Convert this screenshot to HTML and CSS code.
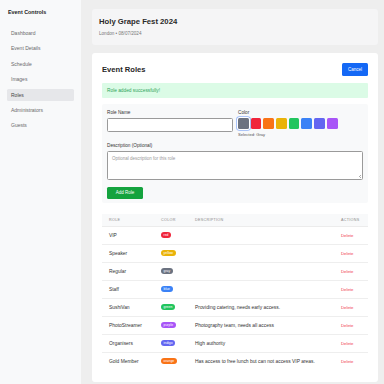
FILE: index.html
```html
<!DOCTYPE html>
<html>
<head>
<meta charset="utf-8">
<link rel="stylesheet" href="styles.css">
</head>
<body>
<div class="layout">
  <aside class="sidebar">
    <div class="side-title">Event Controls</div>
    <nav class="nav">
      <div class="nav-item">Dashboard</div>
      <div class="nav-item">Event Details</div>
      <div class="nav-item">Schedule</div>
      <div class="nav-item">Images</div>
      <div class="nav-item active">Roles</div>
      <div class="nav-item">Administrators</div>
      <div class="nav-item">Guests</div>
    </nav>
  </aside>
  <main class="main">
    <section class="event-head">
      <h1 class="event-title">Holy Grape Fest 2024</h1>
      <div class="event-sub">London • 08/07/2024</div>
    </section>
    <section class="card">
      <div class="card-head">
        <h2 class="card-title">Event Roles</h2>
        <button class="btn btn-blue">Cancel</button>
      </div>
      <div class="alert">Role added successfully!</div>
      <div class="form-box">
        <div class="form-row">
          <div class="field">
            <div class="label">Role Name</div>
            <div class="input"></div>
          </div>
          <div class="field">
            <div class="label">Color</div>
            <div class="swatches">
              <span class="sw sel" style="background:#6b7280"></span>
              <span class="sw" style="background:#f0253b"></span>
              <span class="sw" style="background:#f97316"></span>
              <span class="sw" style="background:#eab308"></span>
              <span class="sw" style="background:#22c55e"></span>
              <span class="sw" style="background:#3b82f6"></span>
              <span class="sw" style="background:#6366f1"></span>
              <span class="sw" style="background:#a855f7"></span>
            </div>
            <div class="selected">Selected: Gray</div>
          </div>
        </div>
        <div class="field desc">
          <div class="label">Description (Optional)</div>
          <div class="textarea">Optional description for this role<span class="grip"></span></div>
        </div>
        <button class="btn btn-green">Add Role</button>
      </div>
      <table class="roles">
        <colgroup><col style="width:52px"><col style="width:34px"><col style="width:146px"><col style="width:34px"></colgroup>
        <thead>
          <tr><th>Role</th><th>Color</th><th>Description</th><th>Actions</th></tr>
        </thead>
        <tbody>
          <tr><td>VIP</td><td><span class="badge" style="background:#f0253b">red</span></td><td></td><td class="del">Delete</td></tr>
          <tr><td>Speaker</td><td><span class="badge" style="background:#eab308">yellow</span></td><td></td><td class="del">Delete</td></tr>
          <tr><td>Regular</td><td><span class="badge" style="background:#6b7280">gray</span></td><td></td><td class="del">Delete</td></tr>
          <tr><td>Staff</td><td><span class="badge" style="background:#3b82f6">blue</span></td><td></td><td class="del">Delete</td></tr>
          <tr><td>SushiVan</td><td><span class="badge" style="background:#22c55e">green</span></td><td>Providing catering, needs early access.</td><td class="del">Delete</td></tr>
          <tr><td>PhotoStreamer</td><td><span class="badge" style="background:#a855f7">purple</span></td><td>Photography team, needs all access</td><td class="del">Delete</td></tr>
          <tr><td>Organisers</td><td><span class="badge" style="background:#6366f1">indigo</span></td><td>High authority</td><td class="del">Delete</td></tr>
          <tr><td>Gold Member</td><td><span class="badge" style="background:#f97316">orange</span></td><td>Has access to free lunch but can not access VIP areas.</td><td class="del">Delete</td></tr>
        </tbody>
      </table>
    </section>
  </main>
</div>
</body>
</html>
```
FILE: styles.css
```css
* { box-sizing: border-box; margin: 0; padding: 0; }
html, body { width: 384px; height: 384px; overflow: hidden; }
body { font-family: "Liberation Sans", Arial, sans-serif; color: #333; background: #eeeeee; }
.layout { display: flex; height: 384px; }
.sidebar { width: 81px; flex: none; background: #f8f9fa; padding: 9px 7px 0 7px; }
.side-title { font-size: 5.4px; font-weight: bold; color: #222; line-height: 6px; padding-left: 1px; }
.nav { margin-top: 12px; display: flex; flex-direction: column; gap: 3.4px; }
.nav-item { height: 12px; line-height: 12px; font-size: 5px; color: #6a6a6a; padding-left: 4px; border-radius: 1.5px; }
.nav-item.active { background: #e6e7ea; color: #444; }
.main { flex: 1; padding: 9px 6px 0 11px; background: #eeeeee; }
.event-head { background: #f5f5f6; border-radius: 3px; height: 36px; padding: 8px 7px; }
.event-title { font-size: 7.7px; font-weight: bold; color: #2a2a2a; line-height: 9px; }
.event-sub { font-size: 4.6px; color: #777; margin-top: 5px; line-height: 5px; }
.card { background: #fff; border-radius: 3px; margin-top: 8px; padding: 10px 10px 10px 10px; height: 329px; }
.card-head { display: flex; justify-content: space-between; align-items: center; height: 13px; }
.card-title { font-size: 7.6px; font-weight: bold; color: #262626; }
.btn { border: none; color: #fff; font-family: inherit; font-size: 4.5px; border-radius: 1.5px; height: 13px; }
.btn-blue { background: #1468f5; width: 26px; }
.alert { margin-top: 7px; height: 15px; line-height: 15px; background: #dbfbe6; color: #2fa35a; font-size: 4.8px; padding-left: 5px; border-radius: 1px; }
.form-box { margin-top: 6px; background: #f8f9fa; border-radius: 2px; padding: 6px 5px 5px 5px; height: 99px; }
.form-row { display: grid; grid-template-columns: 126px 1fr; column-gap: 5px; height: 31px; }
.label { font-size: 4.7px; color: #333; line-height: 6px; height: 6px; }
.input { margin-top: 2px; height: 14px; background: #fff; border: 0.8px solid #9a9a9a; border-radius: 1.5px; }
.swatches { display: flex; gap: 2px; margin-top: 1.5px; }
.sw { width: 10.7px; height: 11px; border-radius: 1.5px; display: block; }
.sw.sel { box-shadow: 0 0 0 1px #fff, 0 0 0 1.8px #93b4f8; }
.selected { font-size: 4.1px; color: #555; margin-top: 3px; line-height: 5px; }
.desc { margin-top: 2px; }
.textarea { position: relative; margin-top: 2px; height: 29px; width: 256px; background: #fff; border: 0.8px solid #9a9a9a; border-radius: 1.5px; font-size: 4.5px; color: #999; padding: 4px 4px; }
.grip { position: absolute; right: 1px; bottom: 1px; width: 3px; height: 3px; background: linear-gradient(135deg, transparent 50%, #aaa 50%, #aaa 60%, transparent 60%, transparent 75%, #aaa 75%, #aaa 85%, transparent 85%); }
.btn-green { margin-top: 6px; background: #14a33e; width: 36px; height: 12px; }
.roles { margin-top: 11px; width: 266px; border-collapse: collapse; table-layout: fixed; }
.roles th { background: #f8f9fa; height: 12px; font-size: 3.7px; font-weight: normal; text-transform: uppercase; letter-spacing: 0.3px; color: #888; text-align: left; padding-left: 7px; border-bottom: 0.6px solid #ececec; }
.roles td { height: 18px; font-size: 4.9px; color: #333; padding-left: 7px; border-bottom: 0.6px solid #eeeeee; white-space: nowrap; }
.roles tr:last-child td { border-bottom: none; }
.badge { display: inline-block; color: #fff; font-size: 3.4px; height: 6px; line-height: 6px; padding: 0 2.6px; border-radius: 3px; vertical-align: middle; }
.roles td.del { color: #f0374a; font-size: 4.3px; }
```
